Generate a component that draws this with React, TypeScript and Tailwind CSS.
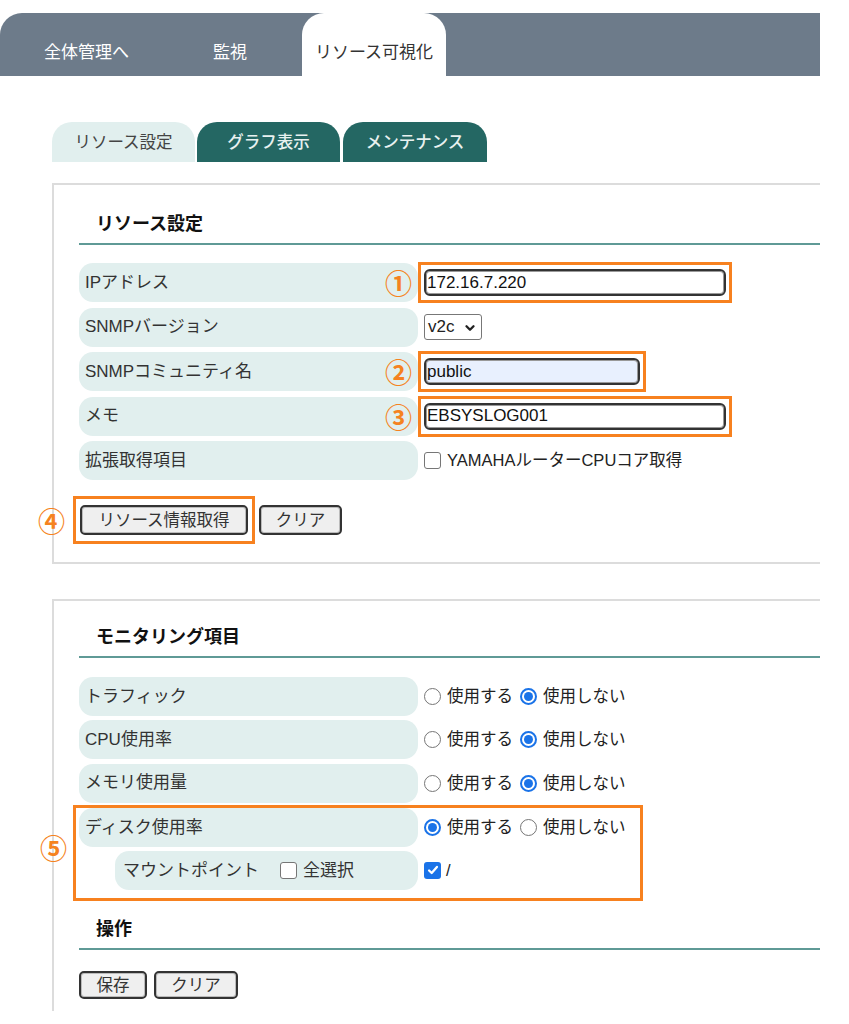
import { ChevronDown } from "lucide-react";

const font = { fontFamily: '"Liberation Sans", "Noto Sans CJK JP", sans-serif' };

function Mark({ n, className }: { n: string; className: string }) {
  return (
    <span
      className={`absolute text-[27px] leading-none font-bold text-[#f58220] ${className}`}
      style={{ fontFamily: '"Noto Sans CJK JP", sans-serif' }}
    >
      {n}
    </span>
  );
}

function Radio({ on }: { on: boolean }) {
  return on ? (
    <span className="flex h-[17px] w-[17px] shrink-0 items-center justify-center rounded-full border-2 border-[#1a73e8] bg-white">
      <span className="block h-[9px] w-[9px] rounded-full bg-[#1a73e8]" />
    </span>
  ) : (
    <span className="block h-[17px] w-[17px] shrink-0 rounded-full border border-[#767676] bg-white" />
  );
}

function Check({ on }: { on?: boolean }) {
  return on ? (
    <span className="flex h-[17px] w-[17px] shrink-0 items-center justify-center rounded-[3px] bg-[#1a73e8]">
      <svg viewBox="0 0 16 16" className="h-[14px] w-[14px]" fill="none" stroke="white" strokeWidth="2.6" strokeLinecap="round" strokeLinejoin="round">
        <path d="M3.5 8.5l3 3 6-7" />
      </svg>
    </span>
  ) : (
    <span className="block h-[17px] w-[17px] shrink-0 rounded-[3px] border border-[#767676] bg-white" />
  );
}

function Row({ label, children, mark }: { label: React.ReactNode; children?: React.ReactNode; mark?: string }) {
  return (
    <div className="relative flex h-[39px]">
      <div className="flex w-[339px] items-center rounded-[14px] bg-[#e1efee] pl-[6px] text-[17px] text-[#333]">{label}</div>
      {mark && <Mark n={mark} className="left-[306px] top-[6px]" />}
      <div className="flex items-center pl-[6px] text-[16.5px] text-[#222]">{children}</div>
    </div>
  );
}

function Heading({ title, top }: { title: string; top: string }) {
  return (
    <div className={`${top} border-b-2 border-[#5f9a96] pb-[9px] pl-[17px] text-[18px] leading-[20px] font-bold text-[#111]`}>
      {title}
    </div>
  );
}

function Btn({ label, w, h = "h-[30px]" }: { label: string; w: string; h?: string }) {
  return (
    <button type="button" className={`${w} ${h} rounded-[5px] border-2 border-[#333] bg-[#efefef] text-[16.5px] text-[#333] shadow-[inset_0_0_0_1px_#bbb]`}>
      {label}
    </button>
  );
}

function TextBox({ value, w, bg = "bg-white" }: { value: string; w: string; bg?: string }) {
  return (
    <input
      readOnly
      value={value}
      className={`${w} ${bg} h-[27px] rounded-[6px] border-2 border-[#333] pl-[1px] text-[17px] text-[#111] outline-none shadow-[inset_0_0_0_1px_#999]`}
    />
  );
}

function Radios({ use }: { use: boolean }) {
  return (
    <div className="flex items-center">
      <Radio on={use} />
      <span className="ml-[6px] mr-[7px]">使用する</span>
      <Radio on={!use} />
      <span className="ml-[6px]">使用しない</span>
    </div>
  );
}

export default function App() {
  return (
    <div className="min-h-[1024px] w-[849px] bg-white pt-[13px]" style={font}>
      <div className="w-[820px] overflow-hidden">
        {/* main nav */}
        <div className="flex h-[63px] rounded-tl-[22px] bg-[#6d7b8a] text-[17px] text-white">
          <div className="flex w-[172px] items-center pl-[44px] pt-[16px]">全体管理へ</div>
          <div className="flex w-[130px] items-center pl-[41px] pt-[16px]">監視</div>
          <div className="flex w-[144px] items-center justify-center rounded-t-[22px] bg-white pt-[16px] text-[#333]">リソース可視化</div>
        </div>

        {/* sub tabs */}
        <div className="ml-[52px] mt-[46px] flex h-[40px] text-[16.5px]">
          <div className="flex w-[143px] items-center justify-center rounded-t-[20px] bg-[#e1efee] text-[#444]">リソース設定</div>
          <div className="ml-[2px] flex w-[143px] items-center justify-center rounded-t-[20px] bg-[#246763] font-medium text-[#e8f1f0]">グラフ表示</div>
          <div className="ml-[3px] flex w-[144px] items-center justify-center rounded-t-[20px] bg-[#246763] font-medium text-[#e8f1f0]">メンテナンス</div>
        </div>

        {/* resource settings */}
        <div className="relative ml-[52px] mt-[21px] w-[800px] border-2 border-[#dcdcdc] pb-[18px] pl-[25px]">
          <Heading title="リソース設定" top="pt-[29px]" />
          <div className="mt-[18px] flex flex-col gap-[5.5px]">
            <Row label="IPアドレス" mark="①">
              <div className="-ml-[6px] border-[3px] border-[#f7811f] px-[3px] py-[4px]">
                <TextBox value="172.16.7.220" w="w-[302px]" />
              </div>
            </Row>
            <Row label="SNMPバージョン">
              <div className="relative flex h-[26px] w-[58px] items-center rounded-[3px] border border-[#777] bg-white pl-[3px] text-[17px]">
                v2c
                <ChevronDown className="absolute right-[4px] top-[6px] h-[14px] w-[14px]" strokeWidth={4} />
              </div>
            </Row>
            <Row label="SNMPコミュニティ名" mark="②">
              <div className="-ml-[6px] border-[3px] border-[#f7811f] px-[3px] py-[4px]">
                <TextBox value="public" w="w-[216px]" bg="bg-[#e8f0fe]" />
              </div>
            </Row>
            <Row label="メモ" mark="③">
              <div className="-ml-[6px] border-[3px] border-[#f7811f] px-[3px] py-[4px]">
                <TextBox value="EBSYSLOG001" w="w-[302px]" />
              </div>
            </Row>
            <Row label="拡張取得項目">
              <Check />
              <span className="ml-[6px]">YAMAHAルーターCPUコア取得</span>
            </Row>
          </div>
          <div className="relative mt-[16px] flex items-center">
            <Mark n="④" className="-left-[41px] top-[11px]" />
            <div className="-ml-[6px] border-[3px] border-[#f7811f] px-[4px] py-[6px]">
              <Btn label="リソース情報取得" w="w-[168px]" />
            </div>
            <div className="ml-[4px]">
              <Btn label="クリア" w="w-[83px]" />
            </div>
          </div>
        </div>

        {/* monitoring items */}
        <div className="relative ml-[52px] mt-[35px] h-[412px] w-[800px] border-l-2 border-t-2 border-[#dcdcdc] pl-[25px]">
          <Heading title="モニタリング項目" top="pt-[26px]" />
          <div className="mt-[19px] flex flex-col gap-[4.3px]">
            <Row label="トラフィック">
              <Radios use={false} />
            </Row>
            <Row label="CPU使用率">
              <Radios use={false} />
            </Row>
            <Row label="メモリ使用量">
              <Radios use={false} />
            </Row>
            <div className="relative -ml-[6px] -mt-[2px] w-[570px] border-[3px] border-[#f7811f] pb-[8px] pl-[3px]">
              <Mark n="⑤" className="-left-[36px] top-[26px]" />
              <Row label="ディスク使用率">
                <Radios use={true} />
              </Row>
              <div className="mt-[4px] flex h-[39px]">
                <div className="ml-[36px] flex w-[303px] items-center rounded-[14px] bg-[#e1efee] pl-[8px] text-[17px] text-[#333]">
                  マウントポイント
                  <span className="ml-[21px] flex">
                    <Check />
                  </span>
                  <span className="ml-[6px]">全選択</span>
                </div>
                <div className="flex items-center pl-[6px] text-[16.5px] text-[#222]">
                  <Check on />
                  <span className="ml-[5px]">/</span>
                </div>
              </div>
            </div>
          </div>
          <Heading title="操作" top="pt-[18px]" />
          <div className="mt-[21px] flex gap-[7px]">
            <Btn label="保存" w="w-[68px]" h="h-[28px]" />
            <Btn label="クリア" w="w-[84px]" h="h-[28px]" />
          </div>
        </div>
      </div>
    </div>
  );
}
